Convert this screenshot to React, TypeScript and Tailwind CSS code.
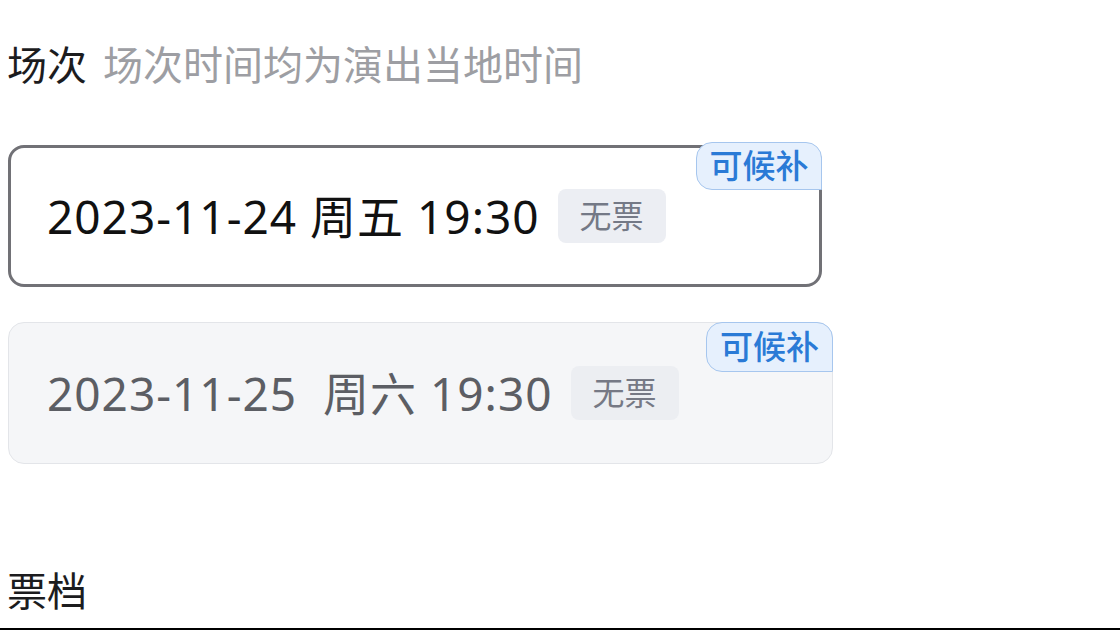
export default function App() {
  const font = { fontFamily: '"Noto Sans", "Noto Sans CJK SC", sans-serif' };
  return (
    <div className="w-[1120px] h-[630px] bg-white flex flex-col overflow-hidden" style={font}>
      <div className="flex items-center pl-[7px] pt-[41px] text-[40px] leading-[48px]">
        <span className="text-[#1c1c1e]">场次</span>
        <span className="ml-4 text-[#9d9ea3]">场次时间均为演出当地时间</span>
      </div>

      <div className="ml-2 mt-[56px] w-[814px] h-[142px] relative rounded-[16px] border-[3px] border-[#717176] bg-white flex items-center pl-[36px]">
        <span className="text-[46px] text-[#111111] whitespace-pre tracking-[1px]">2023-11-24 周五 19:30</span>
        <span className="ml-[18px] h-[54px] w-[108px] rounded-[8px] bg-[#eceef3] text-[#747986] text-[32px] flex items-center justify-center">无票</span>
        <span className="absolute top-[-6px] right-[-3px] w-[126px] h-[48px] bg-[#e6f0fd] border border-[#a6c6ee] rounded-tl-[16px] rounded-bl-[16px] rounded-tr-[16px] text-[#2a7ad6] text-[33px] font-medium flex items-center justify-center">可候补</span>
      </div>

      <div className="ml-2 mt-[35px] w-[825px] h-[142px] relative rounded-[16px] border border-[#e3e5e9] bg-[#f5f6f8] flex items-center pl-[38px]">
        <span className="text-[46px] text-[#5c5e64] whitespace-pre tracking-[1px]">2023-11-25  周六 19:30</span>
        <span className="ml-[18px] h-[54px] w-[108px] rounded-[8px] bg-[#eceef2] text-[#767985] text-[32px] flex items-center justify-center">无票</span>
        <span className="absolute top-[-1px] right-[-1px] w-[127px] h-[50px] bg-[#e6f0fd] border border-[#a6c6ee] rounded-tl-[16px] rounded-bl-[16px] rounded-tr-[16px] text-[#2a7ad6] text-[33px] font-medium flex items-center justify-center">可候补</span>
      </div>

      <div className="pl-[7px] mt-[103px] text-[40px] leading-[48px] text-[#1c1c1e]">票档</div>

      <div className="mt-auto h-[2px] bg-black shrink-0" />
    </div>
  );
}
